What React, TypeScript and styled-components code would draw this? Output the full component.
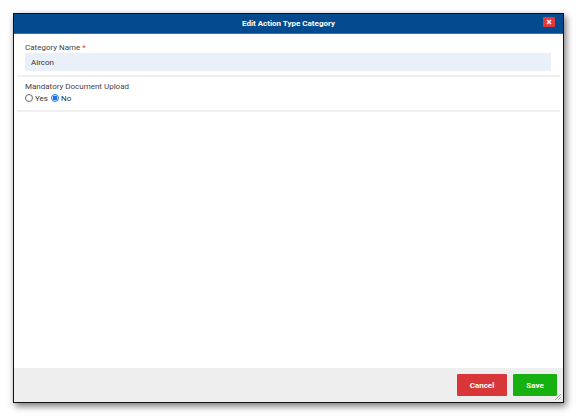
import React from 'react';
import styled, { createGlobalStyle } from 'styled-components';

const GlobalStyle = createGlobalStyle`
  html, body {
    margin: 0;
    padding: 0;
    background: #ffffff;
    font-family: Roboto, "Liberation Sans", Arial, sans-serif;
  }
`;

const Page = styled.div`
  width: 578px;
  height: 416px;
  padding: 13px 0 0 13px;
  box-sizing: border-box;
`;

const Dialog = styled.div`
  position: relative;
  width: 551px;
  height: 390px;
  box-sizing: border-box;
  border: 1px solid #111;
  background: #fff;
  box-shadow: 2px 3px 7px rgba(0, 0, 0, 0.55);
  display: flex;
  flex-direction: column;
`;

const Header = styled.div`
  height: 19px;
  background: #034a8f;
  border-bottom: 1px solid #3b6fa6;
  display: flex;
  align-items: center;
  justify-content: center;
  position: relative;
`;

const Title = styled.span`
  color: #fff;
  font-weight: 700;
  font-size: 8px;
`;

const CloseButton = styled.button`
  position: absolute;
  right: 8px;
  top: 3px;
  width: 12px;
  height: 10px;
  padding: 0;
  border: none;
  border-radius: 1px;
  background: #e0383d;
  display: flex;
  align-items: center;
  justify-content: center;
`;

const Body = styled.div`
  flex: 1;
  padding: 0 3px;
`;

const Row = styled.div<{ $padTop: number; $padBottom: number }>`
  padding: ${(p) => p.$padTop}px 8px ${(p) => p.$padBottom}px;
  border-bottom: 2px solid #efefef;
  display: flex;
  flex-direction: column;
`;

const Label = styled.label`
  font-size: 8px;
  color: #444;
  line-height: 11px;
`;

const Required = styled.span`
  color: #e0383d;
`;

const TextInput = styled.input`
  height: 18px;
  box-sizing: border-box;
  border: none;
  background: #e9f0f9;
  padding: 0 6px;
  font: 8px Roboto, "Liberation Sans", Arial, sans-serif;
  color: #333;
  outline: none;
  margin-right: 1px;
`;

const RadioGroup = styled.div`
  display: flex;
  align-items: center;
  gap: 2px;
  height: 12px;
  font-size: 8px;
  color: #333;
`;

const RadioOption = styled.label`
  display: flex;
  align-items: center;
  gap: 2px;
  margin-right: 1px;
`;

const RadioDot = styled.span<{ $checked?: boolean }>`
  width: 8px;
  height: 8px;
  box-sizing: border-box;
  border-radius: 50%;
  border: 1px solid ${(p) => (p.$checked ? '#1a73e8' : '#666')};
  background: ${(p) => (p.$checked ? 'radial-gradient(circle, #1a73e8 0 2.2px, #fff 2.6px)' : '#fff')};
`;

const Footer = styled.div`
  height: 34px;
  background: #eeeeee;
  display: flex;
  align-items: center;
  justify-content: flex-end;
  gap: 6px;
  padding-right: 6px;
`;

const ActionButton = styled.button<{ $tone: 'cancel' | 'save' }>`
  height: 22px;
  width: ${(p) => (p.$tone === 'cancel' ? '50px' : '44px')};
  border: none;
  border-radius: 1px;
  color: #fff;
  font: 700 8px Roboto, "Liberation Sans", Arial, sans-serif;
  background: ${(p) => (p.$tone === 'cancel' ? '#d9363a' : '#17b011')};
`;

const ResizeGrip = styled.svg`
  position: absolute;
  right: 1px;
  bottom: 1px;
`;

export default function App() {
  return (
    <Page>
      <GlobalStyle />
      <Dialog>
        <Header>
          <Title>Edit Action Type Category</Title>
          <CloseButton aria-label="Close">
            <svg width="6" height="6" viewBox="0 0 6 6">
              <path d="M1 1L5 5M5 1L1 5" stroke="#fff" strokeWidth="1.3" />
            </svg>
          </CloseButton>
        </Header>
        <Body>
          <Row $padTop={8} $padBottom={4}>
            <Label>
              Category Name <Required>*</Required>
            </Label>
            <TextInput defaultValue="Aircon" />
          </Row>
          <Row $padTop={4} $padBottom={6}>
            <Label>Mandatory Document Upload</Label>
            <RadioGroup>
              <RadioOption>
                <RadioDot />
                Yes
              </RadioOption>
              <RadioOption>
                <RadioDot $checked />
                No
              </RadioOption>
            </RadioGroup>
          </Row>
        </Body>
        <Footer>
          <ActionButton $tone="cancel">Cancel</ActionButton>
          <ActionButton $tone="save">Save</ActionButton>
        </Footer>
        <ResizeGrip width="8" height="8" viewBox="0 0 8 8">
          <path d="M7 1L1 7M7 4L4 7M7 6.5L6.5 7" stroke="#999" strokeWidth="0.8" />
        </ResizeGrip>
      </Dialog>
    </Page>
  );
}
